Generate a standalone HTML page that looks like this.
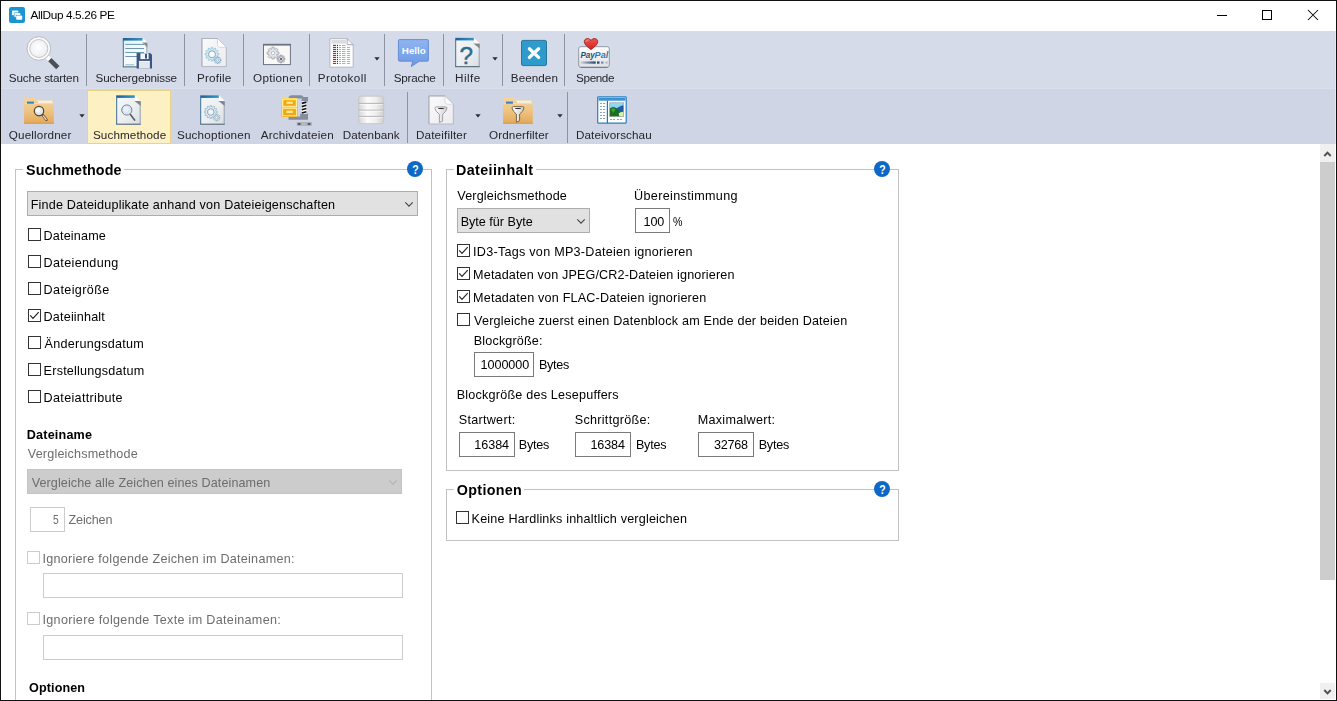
<!DOCTYPE html>
<html lang="de"><head><meta charset="utf-8"><title>AllDup 4.5.26 PE</title>
<style>
html,body{margin:0;padding:0}
body{width:1337px;height:701px;position:relative;overflow:hidden;background:#fff;font-family:"Liberation Sans",sans-serif}
.a{position:absolute}
.t{position:absolute;white-space:pre;line-height:1;font-family:"Liberation Sans",sans-serif}
.sep{position:absolute;width:1px;background:#8e93a3}
.cb{position:absolute;width:11px;height:11px;border:1px solid #333;background:#fff}
.cbd{position:absolute;width:11px;height:11px;border:1px solid #ccc;background:#fff}
.tx{position:absolute;border:1px solid #7a7a7a;background:#fff;box-sizing:border-box}
.txd{position:absolute;border:1px solid #ccc;background:#fff;box-sizing:border-box}
.combo{position:absolute;border:1px solid #adadad;background:#e1e1e1;box-sizing:border-box}
.gl{position:absolute;background:#c3c3c3}
svg{position:absolute;overflow:visible}
</style></head>
<body>
<div class="a" style="left:0px;top:0px;width:1337px;height:31px;background:#fff;"></div>
<div class="a" style="left:1px;top:31px;width:1335px;height:58px;background:#d5dbe9;"></div>
<div class="a" style="left:1px;top:89px;width:1335px;height:55px;background:#cfd5e5;"></div>
<div class="a" style="left:1px;top:88px;width:1335px;height:1px;background:#d9dfed;"></div>
<div class="a" style="left:1335px;top:31px;width:1px;height:113px;background:#e3e7f1;"></div>
<div class="a" style="left:0px;top:0px;width:1337px;height:1px;background:#111;"></div>
<div class="a" style="left:0px;top:0px;width:1px;height:701px;background:#111;"></div>
<div class="a" style="left:1336px;top:0px;width:1px;height:701px;background:#111;"></div>
<div class="a" style="left:0px;top:700px;width:1337px;height:1px;background:#111;"></div>
<div class="a" style="left:1217px;top:15px;width:10px;height:1px;background:#000;"></div>
<div class="a" style="left:1262px;top:10px;width:8px;height:8px;border:1px solid #000"></div>
<svg style="left:1308px;top:10px" width="10" height="10" viewBox="0 0 10 10"><path d="M0 0 L10 10 M10 0 L0 10" stroke="#000" stroke-width="1.05" fill="none"/></svg>
<svg style="left:9px;top:7px" width="16" height="16" viewBox="0 0 16 16"><rect x="0" y="0" width="16" height="16" rx="2.2" fill="#1b94d2"/><rect x="3" y="3.6" width="6.4" height="4.6" rx="0.8" fill="#fff" opacity=".95"/><rect x="5" y="5.6" width="6.4" height="4.6" rx="0.8" fill="#1b94d2"/><rect x="5.4" y="6" width="6" height="4.2" rx="0.8" fill="#eaf5fb"/><rect x="6.8" y="8" width="6.4" height="4.6" rx="0.8" fill="#1b94d2"/><rect x="7.2" y="8.4" width="6" height="4.3" rx="0.8" fill="#fff"/></svg>
<div class="sep" style="left:86px;top:34px;height:52px"></div>
<div class="sep" style="left:184px;top:34px;height:52px"></div>
<div class="sep" style="left:243px;top:34px;height:52px"></div>
<div class="sep" style="left:309px;top:34px;height:52px"></div>
<div class="sep" style="left:384px;top:34px;height:52px"></div>
<div class="sep" style="left:443px;top:34px;height:52px"></div>
<div class="sep" style="left:502px;top:34px;height:52px"></div>
<div class="sep" style="left:564px;top:34px;height:52px"></div>
<div class="sep" style="left:407px;top:92px;height:51px"></div>
<div class="sep" style="left:567px;top:92px;height:51px"></div>
<div class="a" style="left:87px;top:90px;width:82px;height:52px;background:#fdf1c4;border:1px solid #ead288;box-sizing:content-box"></div>
<svg style="left:373.8px;top:57.1px" width="6" height="4" viewBox="0 0 6 4"><path d="M0.3 0.2 H5.7 L3 3.5 Z" fill="#2a2a38"/></svg>
<svg style="left:491.8px;top:57.1px" width="6" height="4" viewBox="0 0 6 4"><path d="M0.3 0.2 H5.7 L3 3.5 Z" fill="#2a2a38"/></svg>
<svg style="left:79px;top:113.8px" width="6" height="4" viewBox="0 0 6 4"><path d="M0.3 0.2 H5.7 L3 3.5 Z" fill="#2a2a38"/></svg>
<svg style="left:474.7px;top:113.8px" width="6" height="4" viewBox="0 0 6 4"><path d="M0.3 0.2 H5.7 L3 3.5 Z" fill="#2a2a38"/></svg>
<svg style="left:556.9px;top:113.8px" width="6" height="4" viewBox="0 0 6 4"><path d="M0.3 0.2 H5.7 L3 3.5 Z" fill="#2a2a38"/></svg>
<svg style="left:0;top:0" width="700" height="146" viewBox="0 0 700 146">

<defs>
 <linearGradient id="gBar" x1="0" y1="0" x2="1" y2="0"><stop offset="0" stop-color="#1d5f96"/><stop offset="1" stop-color="#3596c8"/></linearGradient>
 <linearGradient id="gDoc" x1="0" y1="0" x2="1" y2="1"><stop offset="0" stop-color="#f4f8fb"/><stop offset=".55" stop-color="#eceff2"/><stop offset="1" stop-color="#d9dde1"/></linearGradient>
 <linearGradient id="gDocC" x1="0" y1="0" x2="1" y2="1"><stop offset="0" stop-color="#dff1fa"/><stop offset=".5" stop-color="#f6fbfd"/><stop offset="1" stop-color="#e4eef4"/></linearGradient>
 <linearGradient id="gPlain" x1="0" y1="0" x2="1" y2="1"><stop offset="0" stop-color="#fafafb"/><stop offset="1" stop-color="#ececf0"/></linearGradient>
 <linearGradient id="gFolder" x1="0" y1="0" x2="0" y2="1"><stop offset="0" stop-color="#f3d4a0"/><stop offset=".5" stop-color="#eec482"/><stop offset="1" stop-color="#e3a858"/></linearGradient>
 <linearGradient id="gBubble" x1="0" y1="0" x2="0" y2="1"><stop offset="0" stop-color="#8fb5f0"/><stop offset="1" stop-color="#6d98e4"/></linearGradient>
 <linearGradient id="gDisc" x1="0" y1="0" x2="1" y2="0"><stop offset="0" stop-color="#d4d4d4"/><stop offset=".35" stop-color="#fbfbfb"/><stop offset=".7" stop-color="#eeeeee"/><stop offset="1" stop-color="#cfcfcf"/></linearGradient>
 <linearGradient id="gCard" x1="0" y1="0" x2="0" y2="1"><stop offset="0" stop-color="#ffffff"/><stop offset="1" stop-color="#dfe2e6"/></linearGradient>
 <linearGradient id="gPPbar" x1="0" y1="0" x2="1" y2="0"><stop offset="0" stop-color="#d0d6dc"/><stop offset="1" stop-color="#24426e"/></linearGradient>
 <linearGradient id="gHeart" x1="0" y1="0" x2="0" y2="1"><stop offset="0" stop-color="#f0564c"/><stop offset="1" stop-color="#d2201f"/></linearGradient>
 <linearGradient id="gYel" x1="0" y1="0" x2="0" y2="1"><stop offset="0" stop-color="#fbd23c"/><stop offset="1" stop-color="#f0a612"/></linearGradient>
 <linearGradient id="gSky" x1="0" y1="0" x2="0" y2="1"><stop offset="0" stop-color="#9adcf6"/><stop offset="1" stop-color="#5cc3f0"/></linearGradient>
 <radialGradient id="gLens" cx=".45" cy=".45" r=".6"><stop offset="0" stop-color="#ffffff"/><stop offset="1" stop-color="#e9eaf0"/></radialGradient>
 <linearGradient id="gFunnel" x1="0" y1="0" x2="1" y2="0"><stop offset="0" stop-color="#ffffff"/><stop offset="1" stop-color="#cfcfcf"/></linearGradient>
</defs>

<path d="M47.2 57 L57.6 67.4" stroke="#fafafa" stroke-width="4.2" stroke-linecap="butt"/>
<path d="M49.8 59.6 L57.8 67.6" stroke="#4b4f57" stroke-width="4.6" stroke-linecap="butt"/>
<circle cx="38.8" cy="48.5" r="10.4" fill="url(#gLens)" stroke="#fbfbfb" stroke-width="2.6"/>
<circle cx="38.8" cy="48.5" r="11.8" fill="none" stroke="#b3b5bd" stroke-width=".9"/>
<circle cx="38.8" cy="48.5" r="9" fill="none" stroke="#bdbcbc" stroke-width=".9"/>
<path d="M122.8 38.0 H142.70000000000002 L147.3 42.6 V67.4 H122.8 Z" fill="url(#gDocC)"/><path d="M122.8 38.0 H142.70000000000002 V40.6 H122.8 Z" fill="url(#gBar)"/><path d="M142.70000000000002 38.0 L147.3 42.6 H142.70000000000002 Z" fill="#fdfdfd"/><path d="M142.20000000000002 42.6 H147.3 L147.3 47.6 Z" fill="#4a4744" opacity=".62"/><path d="M123.3 40.0 V66.9" stroke="#3b6c93" stroke-width="1" fill="none"/><path d="M122.8 66.9 H147.3" stroke="#3d5a68" stroke-width="1" fill="none"/><path d="M146.8 43.6 V67.4" stroke="#7e929e" stroke-width="1" fill="none" opacity=".8"/>
<path d="M125.3 44.4 H144" stroke="#5f8aa6" stroke-width=".9"/>
<path d="M125.3 48.5 H144" stroke="#5f8aa6" stroke-width=".9"/>
<path d="M125.3 52.5 H144" stroke="#5f8aa6" stroke-width=".9"/>
<path d="M125.3 56.5 H144" stroke="#5f8aa6" stroke-width=".9"/>
<path d="M125.3 64.8 H134" stroke="#7fb2cc" stroke-width=".9"/>
<path d="M136.6 53 H150.2 L152 54.8 V68.5 H136.6 Z" fill="#3b5682"/>
<rect x="140.4" y="53.3" width="8.2" height="5.8" fill="#f4f6f9"/>
<rect x="145" y="54" width="2" height="4.6" fill="#3b5682"/>
<rect x="138.9" y="61" width="11" height="7.5" fill="#e4e6ea"/>
<path d="M138.9 61.4 H149.9" stroke="#fafafa" stroke-width=".8"/>
<path d="M201.9 38.5 H217.5 L226.3 47.3 V66.6 H201.9 Z" fill="url(#gPlain)" stroke="#b4b8c4" stroke-width="1"/><path d="M217.5 38.5 L226.3 47.3 H220.0 Q217.5 47.3 217.5 44.8 Z" fill="#fff" stroke="#c2c5ce" stroke-width=".6"/><path d="M201.9 66.6 V38.5 H217.5" fill="none" stroke="#aeb2be" stroke-width="1"/>
<path d="M217.23 53.44 L218.87 53.61 L218.87 54.99 L217.23 55.16 L216.96 56.17 L218.29 57.14 L217.60 58.33 L216.10 57.66 L215.36 58.40 L216.03 59.90 L214.84 60.59 L213.87 59.26 L212.86 59.53 L212.69 61.17 L211.31 61.17 L211.14 59.53 L210.13 59.26 L209.16 60.59 L207.97 59.90 L208.64 58.40 L207.90 57.66 L206.40 58.33 L205.71 57.14 L207.04 56.17 L206.77 55.16 L205.13 54.99 L205.13 53.61 L206.77 53.44 L207.04 52.43 L205.71 51.46 L206.40 50.27 L207.90 50.94 L208.64 50.20 L207.97 48.70 L209.16 48.01 L210.13 49.34 L211.14 49.07 L211.31 47.43 L212.69 47.43 L212.86 49.07 L213.87 49.34 L214.84 48.01 L216.03 48.70 L215.36 50.20 L216.10 50.94 L217.60 50.27 L218.29 51.46 L216.96 52.43 Z" fill="#d9edf4" stroke="#93c4d8" stroke-width="0.8" stroke-linejoin="round"/>
<circle cx="212" cy="54.3" r="3.5" fill="#f8fafb" stroke="#6c9cb8" stroke-width=".9"/>
<path d="M219.93 59.62 L221.06 59.68 L221.06 60.72 L219.93 60.78 L219.66 61.44 L220.42 62.28 L219.68 63.02 L218.84 62.26 L218.18 62.53 L218.12 63.66 L217.08 63.66 L217.02 62.53 L216.36 62.26 L215.52 63.02 L214.78 62.28 L215.54 61.44 L215.27 60.78 L214.14 60.72 L214.14 59.68 L215.27 59.62 L215.54 58.96 L214.78 58.12 L215.52 57.38 L216.36 58.14 L217.02 57.87 L217.08 56.74 L218.12 56.74 L218.18 57.87 L218.84 58.14 L219.68 57.38 L220.42 58.12 L219.66 58.96 Z" fill="#e4eff4" stroke="#6e9ab4" stroke-width="0.7" stroke-linejoin="round"/>
<circle cx="217.6" cy="60.2" r="1.1" fill="#f8fafb" stroke="#6e9ab4" stroke-width=".5"/>
<rect x="263.5" y="44.4" width="26.9" height="20.2" fill="#f8f8f6" stroke="#6e7280" stroke-width="1"/>
<rect x="263" y="43.9" width="27.9" height="1.7" fill="#6e7280"/>
<path d="M276.91 51.88 L278.90 52.00 L278.90 54.20 L276.91 54.32 L276.63 55.01 L277.95 56.49 L276.39 58.05 L274.91 56.73 L274.22 57.01 L274.10 59.00 L271.90 59.00 L271.78 57.01 L271.09 56.73 L269.61 58.05 L268.05 56.49 L269.37 55.01 L269.09 54.32 L267.10 54.20 L267.10 52.00 L269.09 51.88 L269.37 51.19 L268.05 49.71 L269.61 48.15 L271.09 49.47 L271.78 49.19 L271.90 47.20 L274.10 47.20 L274.22 49.19 L274.91 49.47 L276.39 48.15 L277.95 49.71 L276.63 51.19 Z" fill="#e3e6e9" stroke="#9aa0a9" stroke-width="0.8" stroke-linejoin="round"/>
<circle cx="273" cy="53.1" r="1.7" fill="#fdfdfd" stroke="#a6abb3" stroke-width=".7"/>
<path d="M284.06 58.08 L284.94 58.29 L284.94 59.71 L284.06 59.92 L283.82 60.52 L284.29 61.28 L283.28 62.29 L282.52 61.82 L281.92 62.06 L281.71 62.94 L280.29 62.94 L280.08 62.06 L279.48 61.82 L278.72 62.29 L277.71 61.28 L278.18 60.52 L277.94 59.92 L277.06 59.71 L277.06 58.29 L277.94 58.08 L278.18 57.48 L277.71 56.72 L278.72 55.71 L279.48 56.18 L280.08 55.94 L280.29 55.06 L281.71 55.06 L281.92 55.94 L282.52 56.18 L283.28 55.71 L284.29 56.72 L283.82 57.48 Z" fill="#d3d6da" stroke="#92969f" stroke-width="0.8" stroke-linejoin="round"/>
<circle cx="281" cy="59" r="2.3" fill="#e9ebed" stroke="#8a8e97" stroke-width=".7"/>
<rect x="280" y="58" width="2" height="2" fill="#686c76"/>
<path d="M329.9 38.7 H347.2 L353.2 44.7 V67.2 H329.9 Z" fill="#fdfdfd" stroke="#b4b8c4" stroke-width="1"/>
<path d="M347.2 38.7 V44.7 H353.2" fill="none" stroke="#9ca0ac" stroke-width=".9"/>
<rect x="331.5" y="40" width="14.5" height="3.6" fill="#dcdcde"/>
<rect x="333" y="44.85" width="3.1" height="1.1" fill="#6a3a6c"/>
<rect x="337" y="44.85" width="1" height="1.1" fill="#3a2a3a"/>
<rect x="339" y="44.95" width="2" height=".9" fill="#a2a8a6"/>
<rect x="342" y="44.95" width="3.5" height=".9" fill="#a2a8a6"/>
<rect x="333" y="46.85" width="3.1" height="1.1" fill="#5b3a7c"/>
<rect x="337" y="46.85" width="1" height="1.1" fill="#3a2a3a"/>
<rect x="339" y="46.95" width="2" height=".9" fill="#a2a8a6"/>
<rect x="342" y="46.95" width="3.5" height=".9" fill="#a2a8a6"/>
<rect x="347" y="46.95" width="3" height=".9" fill="#a2a8a6"/>
<rect x="333" y="48.85" width="3.1" height="1.1" fill="#3050a0"/>
<rect x="337" y="48.85" width="1" height="1.1" fill="#3a2a3a"/>
<rect x="339" y="48.95" width="2" height=".9" fill="#a2a8a6"/>
<rect x="342" y="48.95" width="3.5" height=".9" fill="#a2a8a6"/>
<rect x="347" y="48.95" width="3" height=".9" fill="#a2a8a6"/>
<rect x="333" y="50.85" width="3.1" height="1.1" fill="#7c2a5c"/>
<rect x="337" y="50.85" width="1" height="1.1" fill="#3a2a3a"/>
<rect x="339" y="50.95" width="2" height=".9" fill="#a2a8a6"/>
<rect x="342" y="50.95" width="3.5" height=".9" fill="#a2a8a6"/>
<rect x="347" y="50.95" width="3" height=".9" fill="#a2a8a6"/>
<rect x="333" y="52.85" width="3.1" height="1.1" fill="#2f5f7c"/>
<rect x="337" y="52.85" width="1" height="1.1" fill="#3a2a3a"/>
<rect x="339" y="52.95" width="2" height=".9" fill="#a2a8a6"/>
<rect x="342" y="52.95" width="3.5" height=".9" fill="#a2a8a6"/>
<rect x="347" y="52.95" width="3" height=".9" fill="#a2a8a6"/>
<rect x="333" y="54.85" width="3.1" height="1.1" fill="#b4201e"/>
<rect x="337" y="54.85" width="1" height="1.1" fill="#3a2a3a"/>
<rect x="339" y="54.95" width="2" height=".9" fill="#a2a8a6"/>
<rect x="342" y="54.95" width="3.5" height=".9" fill="#a2a8a6"/>
<rect x="347" y="54.95" width="3" height=".9" fill="#a2a8a6"/>
<rect x="333" y="56.85" width="3.1" height="1.1" fill="#a82018"/>
<rect x="337" y="56.85" width="1" height="1.1" fill="#3a2a3a"/>
<rect x="339" y="56.95" width="2" height=".9" fill="#a2a8a6"/>
<rect x="342" y="56.95" width="3.5" height=".9" fill="#a2a8a6"/>
<rect x="347" y="56.95" width="3" height=".9" fill="#a2a8a6"/>
<rect x="333" y="58.85" width="3.1" height="1.1" fill="#a02418"/>
<rect x="337" y="58.85" width="1" height="1.1" fill="#3a2a3a"/>
<rect x="339" y="58.95" width="2" height=".9" fill="#a2a8a6"/>
<rect x="342" y="58.95" width="3.5" height=".9" fill="#a2a8a6"/>
<rect x="347" y="58.95" width="3" height=".9" fill="#a2a8a6"/>
<rect x="333" y="60.85" width="3.1" height="1.1" fill="#c03414"/>
<rect x="337" y="60.85" width="1" height="1.1" fill="#3a2a3a"/>
<rect x="339" y="60.95" width="2" height=".9" fill="#a2a8a6"/>
<rect x="342" y="60.95" width="3.5" height=".9" fill="#a2a8a6"/>
<rect x="347" y="60.95" width="3" height=".9" fill="#a2a8a6"/>
<rect x="333" y="62.85" width="3.1" height="1.1" fill="#a42a1a"/>
<rect x="337" y="62.85" width="1" height="1.1" fill="#3a2a3a"/>
<rect x="339" y="62.95" width="2" height=".9" fill="#a2a8a6"/>
<rect x="342" y="62.95" width="3.5" height=".9" fill="#a2a8a6"/>
<rect x="347" y="62.95" width="3" height=".9" fill="#a2a8a6"/>
<path d="M399.6 39.6 H427.2 Q428.4 39.6 428.4 40.8 V60 Q428.4 61.2 427.2 61.2 H419.4 L411.2 66.6 L412.8 61.2 H399.6 Q398.4 61.2 398.4 60 V40.8 Q398.4 39.6 399.6 39.6 Z" fill="url(#gBubble)" stroke="#6088d2" stroke-width=".9"/>
<text x="413.8" y="54" text-anchor="middle" font-family="'Liberation Sans',sans-serif" font-weight="700" font-size="9.8" fill="#f4fbff" textLength="24" lengthAdjust="spacingAndGlyphs">Hello</text>
<path d="M455.2 37.8 H473.9 L479.7 43.599999999999994 V67.19999999999999 H455.2 Z" fill="url(#gDoc)"/><path d="M455.2 37.8 H473.9 V40.4 H455.2 Z" fill="url(#gBar)"/><path d="M473.9 37.8 L479.7 43.599999999999994 H473.9 Z" fill="#fdfdfd"/><path d="M473.4 43.599999999999994 H479.7 L479.7 48.599999999999994 Z" fill="#4a4744" opacity=".62"/><path d="M455.7 39.8 V66.69999999999999" stroke="#3b6c93" stroke-width="1" fill="none"/><path d="M455.2 66.69999999999999 H479.7" stroke="#3d5a68" stroke-width="1" fill="none"/><path d="M479.2 44.599999999999994 V67.19999999999999" stroke="#7e929e" stroke-width="1" fill="none" opacity=".8"/>
<text x="466.3" y="63.7" text-anchor="middle" font-family="'Liberation Sans',sans-serif" font-size="24.3" fill="#2f6d8e" stroke="#2f6d8e" stroke-width=".45">?</text>
<rect x="521.5" y="40.4" width="25" height="25.2" rx="1.6" fill="#2e9bcc" stroke="#1f6e98" stroke-width=".9"/>
<path d="M529.4 48.8 L538.6 57.4 M538.6 48.8 L529.4 57.4" stroke="#fff" stroke-width="3.3" stroke-linecap="round"/>
<rect x="578.7" y="46.7" width="30.6" height="20.6" rx="2.2" fill="url(#gCard)" stroke="#8c9099" stroke-width=".9"/>
<path d="M580.5 67.4 H607.5" stroke="#6e727a" stroke-width=".9"/>
<text x="580.4" y="57.5" font-family="'Liberation Sans',sans-serif" font-style="italic" font-weight="700" font-size="8.9" fill="#2c4c76" textLength="14.4" lengthAdjust="spacingAndGlyphs">Pay</text>
<text x="594.6" y="57.5" font-family="'Liberation Sans',sans-serif" font-style="italic" font-weight="700" font-size="8.9" fill="#3c74a4" textLength="13.6" lengthAdjust="spacingAndGlyphs">Pal</text>
<rect x="580.5" y="61.4" width="15.2" height="2.3" fill="url(#gPPbar)"/>
<rect x="597" y="61.4" width="2.5" height="2.3" fill="#2c4c76"/>
<rect x="601" y="61.4" width="2.5" height="2.3" fill="#7c8fa8"/>
<rect x="605.3" y="61.4" width="2.5" height="2.3" fill="#b4c0cc"/>
<path d="M591 49.6 C586.5 46.4 584 43.6 584.3 41.2 C584.6 38.4 588.6 37.4 591 40.4 C593.4 37.4 597.4 38.4 597.7 41.2 C598 43.6 595.5 46.4 591 49.6 Z" fill="url(#gHeart)" stroke="#8c1a1a" stroke-width=".8"/>
<path d="M586 41.4 Q586.4 39.6 588.4 39.8" stroke="#f9948a" stroke-width="1" fill="none" stroke-linecap="round"/>
<path d="M36.1 100.4 H52.599999999999994 V105.0 H36.1 Z" fill="#f7efdc" stroke="#ead9b4" stroke-width=".5"/><path d="M24.1 99.0 Q24.1 98.0 25.1 98.0 H35.1 L38.6 103.1 H52.8 Q53.8 103.1 53.8 104.1 V123.7 H24.1 Z" fill="url(#gFolder)"/><path d="M24.6 103.6 H53.3" stroke="#f9e4b6" stroke-width="1" opacity=".7"/><path d="M24.1 123.2 H53.8" stroke="#d49e50" stroke-width="1"/><rect x="27.0" y="101.6" width="6.9" height="2.1" fill="#2b86cc"/>
<path d="M42.4 114.8 L46.4 119.8" stroke="#5e4426" stroke-width="2.6" stroke-linecap="round"/>
<path d="M43.2 115.8 L46.2 119.5" stroke="#f2e4cc" stroke-width="1.2" stroke-linecap="round"/>
<circle cx="39" cy="111.1" r="4.7" fill="#dde6ee" stroke="#5e4426" stroke-width="1.2"/>
<circle cx="38.2" cy="110.2" r="2.4" fill="#fafcfe" opacity=".85"/>
<path d="M116.2 95.3 H134.89999999999998 L140.7 101.1 V124.69999999999999 H116.2 Z" fill="url(#gDoc)"/><path d="M116.2 95.3 H134.89999999999998 V97.89999999999999 H116.2 Z" fill="url(#gBar)"/><path d="M134.89999999999998 95.3 L140.7 101.1 H134.89999999999998 Z" fill="#fdfdfd"/><path d="M134.39999999999998 101.1 H140.7 L140.7 106.1 Z" fill="#4a4744" opacity=".62"/><path d="M116.7 97.3 V124.19999999999999" stroke="#3b6c93" stroke-width="1" fill="none"/><path d="M116.2 124.19999999999999 H140.7" stroke="#3d5a68" stroke-width="1" fill="none"/><path d="M140.2 102.1 V124.69999999999999" stroke="#7e929e" stroke-width="1" fill="none" opacity=".8"/>
<path d="M130.4 114.4 L134.6 120" stroke="#5c6068" stroke-width="1.7" stroke-linecap="round"/>
<circle cx="126.8" cy="110" r="5.1" fill="#d7e5f5" stroke="#7e868f" stroke-width="1"/>
<circle cx="126.2" cy="109.2" r="2.6" fill="#eaf2fb" opacity=".9"/>
<path d="M200.2 95.3 H218.89999999999998 L224.7 101.1 V124.69999999999999 H200.2 Z" fill="url(#gDoc)"/><path d="M200.2 95.3 H218.89999999999998 V97.89999999999999 H200.2 Z" fill="url(#gBar)"/><path d="M218.89999999999998 95.3 L224.7 101.1 H218.89999999999998 Z" fill="#fdfdfd"/><path d="M218.39999999999998 101.1 H224.7 L224.7 106.1 Z" fill="#4a4744" opacity=".62"/><path d="M200.7 97.3 V124.19999999999999" stroke="#3b6c93" stroke-width="1" fill="none"/><path d="M200.2 124.19999999999999 H224.7" stroke="#3d5a68" stroke-width="1" fill="none"/><path d="M224.2 102.1 V124.69999999999999" stroke="#7e929e" stroke-width="1" fill="none" opacity=".8"/>
<path d="M215.83 111.18 L217.37 111.34 L217.37 112.66 L215.83 112.82 L215.57 113.80 L216.82 114.72 L216.16 115.85 L214.75 115.23 L214.03 115.95 L214.65 117.36 L213.52 118.02 L212.60 116.77 L211.62 117.03 L211.46 118.57 L210.14 118.57 L209.98 117.03 L209.00 116.77 L208.08 118.02 L206.95 117.36 L207.57 115.95 L206.85 115.23 L205.44 115.85 L204.78 114.72 L206.03 113.80 L205.77 112.82 L204.23 112.66 L204.23 111.34 L205.77 111.18 L206.03 110.20 L204.78 109.28 L205.44 108.15 L206.85 108.77 L207.57 108.05 L206.95 106.64 L208.08 105.98 L209.00 107.23 L209.98 106.97 L210.14 105.43 L211.46 105.43 L211.62 106.97 L212.60 107.23 L213.52 105.98 L214.65 106.64 L214.03 108.05 L214.75 108.77 L216.16 108.15 L216.82 109.28 L215.57 110.20 Z" fill="#e2ecf1" stroke="#96b6c8" stroke-width="0.8" stroke-linejoin="round"/>
<circle cx="210.8" cy="112" r="3.3" fill="#f0f4f7" stroke="#7c9fb6" stroke-width=".9"/>
<path d="M218.83 117.05 L219.96 117.09 L219.96 118.11 L218.83 118.15 L218.57 118.79 L219.33 119.62 L218.62 120.33 L217.79 119.57 L217.15 119.83 L217.11 120.96 L216.09 120.96 L216.05 119.83 L215.41 119.57 L214.58 120.33 L213.87 119.62 L214.63 118.79 L214.37 118.15 L213.24 118.11 L213.24 117.09 L214.37 117.05 L214.63 116.41 L213.87 115.58 L214.58 114.87 L215.41 115.63 L216.05 115.37 L216.09 114.24 L217.11 114.24 L217.15 115.37 L217.79 115.63 L218.62 114.87 L219.33 115.58 L218.57 116.41 Z" fill="#e4ecf1" stroke="#86a4b8" stroke-width="0.7" stroke-linejoin="round"/>
<circle cx="216.6" cy="117.6" r="1.1" fill="#f0f4f7" stroke="#86a4b8" stroke-width=".5"/>
<path d="M288.5 98.4 Q288.5 95.2 292 95.2 H300.5 Q303 95.2 303.4 97 H308 V101.6 H301.6 V98.6 Z" fill="#858d9f"/>
<path d="M300.2 113.4 H308 V119.8 H288.5 V116.4 H300.2 Z" fill="#858d9f"/>
<rect x="301.6" y="101.2" width="5" height="12.6" fill="#fbfbfb"/>
<path d="M301.8 103.40 L306.4 102.10" stroke="#15151a" stroke-width="1.7"/>
<path d="M301.8 106.60 L306.4 105.30" stroke="#15151a" stroke-width="1.7"/>
<path d="M301.8 109.80 L306.4 108.50" stroke="#15151a" stroke-width="1.7"/>
<path d="M301.8 113.00 L306.4 111.70" stroke="#15151a" stroke-width="1.7"/>
<rect x="281.4" y="98" width="16.4" height="18.9" rx=".8" fill="url(#gYel)"/>
<rect x="282.6" y="99.1" width="14" height="7.6" fill="none" stroke="#fff4b4" stroke-width=".9"/>
<rect x="283.8" y="100.39999999999999" width="11.6" height="5" fill="#f2a614"/>
<rect x="286.4" y="101.6" width="6.4" height="2.3" fill="#ffe690"/>
<rect x="282.6" y="108.2" width="14" height="7.6" fill="none" stroke="#fff4b4" stroke-width=".9"/>
<rect x="283.8" y="109.5" width="11.6" height="5" fill="#f2a614"/>
<rect x="286.4" y="110.7" width="6.4" height="2.3" fill="#ffe690"/>
<rect x="296.8" y="122.3" width="14.8" height="3.3" fill="#9a9ea8"/>
<rect x="301.6" y="121.9" width="5" height="4" fill="#b4b8c0"/>
<path d="M298.2 123.95 H300.2 M308.2 123.95 H310.2" stroke="#3a3e48" stroke-width="1.5"/>
<rect x="358.6" y="96.2" width="25.1" height="27.4" rx="2.6" fill="url(#gDisc)" stroke="#c4c4c4" stroke-width=".8"/>
<path d="M358.8 103.4 H383.6" stroke="#b4b4b4" stroke-width="1"/>
<path d="M359.6 104.4 H382.8" stroke="#ffffff" stroke-width=".8" opacity=".8"/>
<path d="M358.8 110.2 H383.6" stroke="#b4b4b4" stroke-width="1"/>
<path d="M359.6 111.2 H382.8" stroke="#ffffff" stroke-width=".8" opacity=".8"/>
<path d="M358.8 116.4 H383.6" stroke="#b4b4b4" stroke-width="1"/>
<path d="M359.6 117.4 H382.8" stroke="#ffffff" stroke-width=".8" opacity=".8"/>
<path d="M428.9 95.9 H444.99999999999994 L453.29999999999995 104.2 V124.0 H428.9 Z" fill="url(#gPlain)" stroke="#b4b8c4" stroke-width="1"/><path d="M444.99999999999994 95.9 L453.29999999999995 104.2 H447.49999999999994 Q444.99999999999994 104.2 444.99999999999994 101.7 Z" fill="#fff" stroke="#c2c5ce" stroke-width=".6"/><path d="M428.9 124.0 V95.9 H444.99999999999994" fill="none" stroke="#aeb2be" stroke-width="1"/>
<path d="M435 108.10000000000001 Q435 106.9 436.5 106.9 H445.5 Q447 106.9 447 108.10000000000001 Q446.6 111.4 442.6 114.4 V121.10000000000001 L439.4 122.5 V114.4 Q435.4 111.4 435 108.10000000000001 Z" fill="url(#gFunnel)" stroke="#979797" stroke-width=".9" stroke-linejoin="round"/><ellipse cx="441" cy="108.5" rx="3.3" ry=".62" fill="#1e1e1e"/>
<path d="M515.1 100.4 H531.6 V105.0 H515.1 Z" fill="#f7efdc" stroke="#ead9b4" stroke-width=".5"/><path d="M503.1 99.0 Q503.1 98.0 504.1 98.0 H514.1 L517.6 103.1 H531.8000000000001 Q532.8000000000001 103.1 532.8000000000001 104.1 V123.7 H503.1 Z" fill="url(#gFolder)"/><path d="M503.6 103.6 H532.3000000000001" stroke="#f9e4b6" stroke-width="1" opacity=".7"/><path d="M503.1 123.2 H532.8000000000001" stroke="#d49e50" stroke-width="1"/><rect x="506.0" y="101.6" width="6.9" height="2.1" fill="#2b86cc"/>
<path d="M512 107.8 Q512 106.6 513.5 106.6 H522.5 Q524 106.6 524 107.8 Q523.6 111.1 519.6 114.1 V120.8 L516.4 122.19999999999999 V114.1 Q512.4 111.1 512 107.8 Z" fill="url(#gFunnel)" stroke="#6e5a3a" stroke-width=".9" stroke-linejoin="round"/><ellipse cx="518" cy="108.5" rx="3.3" ry=".62" fill="#1e1e1e"/>
<rect x="597.7" y="96.8" width="28.5" height="26.3" rx=".6" fill="#fdfeff" stroke="#2a80c2" stroke-width="1.2"/>
<rect x="598.6" y="97.8" width="26.8" height="2.9" fill="#3a92d0"/>
<path d="M607.4 100.7 V123" stroke="#1f78b8" stroke-width="1.2"/>
<path d="M600 103.5 H602 M603 103.5 H605.2" stroke="#9aa0aa" stroke-width="1"/>
<path d="M600 106.5 H602 M603 106.5 H605.2" stroke="#9aa0aa" stroke-width="1"/>
<path d="M600 109.5 H602 M603 109.5 H605.2" stroke="#9aa0aa" stroke-width="1"/>
<path d="M600 112.5 H602 M603 112.5 H605.2" stroke="#9aa0aa" stroke-width="1"/>
<path d="M600 115.5 H602 M603 115.5 H605.2" stroke="#9aa0aa" stroke-width="1"/>
<path d="M600 118.5 H602 M603 118.5 H605.2" stroke="#9aa0aa" stroke-width="1"/>
<rect x="609.7" y="102.8" width="14" height="13.7" fill="url(#gSky)"/>
<path d="M616 108.5 L622.4 105.2 L623.7 106 V112 H616 Z" fill="#1f5ea6"/>
<path d="M609.7 108.6 Q613 105.8 616.2 108.2 Q619.5 110.4 621 114 V116.5 H609.7 Z" fill="#1c6e1c"/>
<path d="M611 109 Q613.5 107.4 615.6 109.4 L613 113 Z" fill="#3ea032"/>
<path d="M618.6 113.2 L623.7 111.4 V116.5 H619.4 Z" fill="#dcefa4"/>
<rect x="609.7" y="102.8" width="14" height="13.7" fill="none" stroke="#9aa4a0" stroke-width=".7"/>
<path d="M610 119.5 H612 M613 119.5 H615 M617 119.5 H619 M620 119.5 H622" stroke="#9aa0aa" stroke-width="1"/>
</svg>
<div class="a" style="left:15px;top:169px;width:1px;height:531px;background:#c3c3c3;"></div>
<div class="a" style="left:15px;top:169px;width:8px;height:1px;background:#c3c3c3;"></div>
<div class="a" style="left:124px;top:169px;width:308px;height:1px;background:#c3c3c3;"></div>
<div class="a" style="left:431px;top:169px;width:1px;height:531px;background:#c3c3c3;"></div>
<svg style="left:406px;top:160px" width="18" height="18" viewBox="0 0 18 18"><circle cx="9" cy="9" r="8" fill="#0e68c6"/><g transform="translate(9.4 13.8) scale(.8 1)"><text x="0" y="0" text-anchor="middle" font-family='"Liberation Sans",sans-serif' font-weight="700" font-size="13.2" fill="#fff">?</text></g></svg>
<div class="combo" style="left:27px;top:191px;width:391px;height:25px"></div>
<svg style="left:405px;top:202px" width="8" height="5" viewBox="0 0 8 5"><path d="M0.3 0.4 L4 4.2 L7.7 0.4" fill="none" stroke="#444" stroke-width="1.1"/></svg>
<div class="cb" style="left:28px;top:228px"></div>
<div class="cb" style="left:28px;top:255px"></div>
<div class="cb" style="left:28px;top:282px"></div>
<div class="cb" style="left:28px;top:309px"></div><svg style="left:28px;top:309px" width="13" height="13" viewBox="0 0 13 13"><path d="M2.2 6.3 L5 9.3 L10.7 3.1" fill="none" stroke="#222" stroke-width="1.15"/></svg>
<div class="cb" style="left:28px;top:336px"></div>
<div class="cb" style="left:28px;top:363px"></div>
<div class="cb" style="left:28px;top:390px"></div>
<div class="combo" style="left:27px;top:469px;width:375px;height:25px;background:#ccc;border-color:#c4c4c4"></div>
<svg style="left:389px;top:480px" width="8" height="5" viewBox="0 0 8 5"><path d="M0.3 0.4 L4 4.2 L7.7 0.4" fill="none" stroke="#b4b4b4" stroke-width="1.1"/></svg>
<div class="txd" style="left:30px;top:507px;width:35px;height:25px"></div>
<div class="cbd" style="left:27px;top:551px"></div>
<div class="txd" style="left:43px;top:573px;width:360px;height:25px"></div>
<div class="cbd" style="left:27px;top:612px"></div>
<div class="txd" style="left:43px;top:635px;width:360px;height:25px"></div>
<div class="a" style="left:446px;top:169px;width:1px;height:302px;background:#c3c3c3;"></div>
<div class="a" style="left:446px;top:169px;width:8px;height:1px;background:#c3c3c3;"></div>
<div class="a" style="left:536px;top:169px;width:363px;height:1px;background:#c3c3c3;"></div>
<div class="a" style="left:898px;top:169px;width:1px;height:302px;background:#c3c3c3;"></div>
<div class="a" style="left:446px;top:470px;width:453px;height:1px;background:#c3c3c3;"></div>
<svg style="left:873px;top:160px" width="18" height="18" viewBox="0 0 18 18"><circle cx="9" cy="9" r="8" fill="#0e68c6"/><g transform="translate(9.4 13.8) scale(.8 1)"><text x="0" y="0" text-anchor="middle" font-family='"Liberation Sans",sans-serif' font-weight="700" font-size="13.2" fill="#fff">?</text></g></svg>
<div class="combo" style="left:457px;top:208px;width:133px;height:25px"></div>
<svg style="left:577px;top:219px" width="8" height="5" viewBox="0 0 8 5"><path d="M0.3 0.4 L4 4.2 L7.7 0.4" fill="none" stroke="#444" stroke-width="1.1"/></svg>
<div class="tx" style="left:635px;top:208px;width:35px;height:25px"></div>
<div class="cb" style="left:457px;top:244px"></div><svg style="left:457px;top:244px" width="13" height="13" viewBox="0 0 13 13"><path d="M2.2 6.3 L5 9.3 L10.7 3.1" fill="none" stroke="#222" stroke-width="1.15"/></svg>
<div class="cb" style="left:457px;top:267px"></div><svg style="left:457px;top:267px" width="13" height="13" viewBox="0 0 13 13"><path d="M2.2 6.3 L5 9.3 L10.7 3.1" fill="none" stroke="#222" stroke-width="1.15"/></svg>
<div class="cb" style="left:457px;top:290px"></div><svg style="left:457px;top:290px" width="13" height="13" viewBox="0 0 13 13"><path d="M2.2 6.3 L5 9.3 L10.7 3.1" fill="none" stroke="#222" stroke-width="1.15"/></svg>
<div class="cb" style="left:457px;top:313px"></div>
<div class="tx" style="left:474px;top:352px;width:60px;height:25px"></div>
<div class="tx" style="left:459px;top:432px;width:56px;height:25px"></div>
<div class="tx" style="left:575px;top:432px;width:56px;height:25px"></div>
<div class="tx" style="left:698px;top:432px;width:56px;height:25px"></div>
<div class="a" style="left:446px;top:489px;width:1px;height:52px;background:#c3c3c3;"></div>
<div class="a" style="left:446px;top:489px;width:8px;height:1px;background:#c3c3c3;"></div>
<div class="a" style="left:524px;top:489px;width:375px;height:1px;background:#c3c3c3;"></div>
<div class="a" style="left:898px;top:489px;width:1px;height:52px;background:#c3c3c3;"></div>
<div class="a" style="left:446px;top:540px;width:453px;height:1px;background:#c3c3c3;"></div>
<svg style="left:873px;top:480px" width="18" height="18" viewBox="0 0 18 18"><circle cx="9" cy="9" r="8" fill="#0e68c6"/><g transform="translate(9.4 13.8) scale(.8 1)"><text x="0" y="0" text-anchor="middle" font-family='"Liberation Sans",sans-serif' font-weight="700" font-size="13.2" fill="#fff">?</text></g></svg>
<div class="cb" style="left:456px;top:511px"></div>
<div class="a" style="left:1320px;top:144px;width:15px;height:18px;background:#f0f0f0;"></div>
<div class="a" style="left:1320px;top:162px;width:15px;height:418px;background:#cdcdcd;"></div>
<div class="a" style="left:1320px;top:683px;width:15px;height:16px;background:#f0f0f0;"></div>
<svg style="left:1324px;top:151px" width="7" height="6" viewBox="0 0 7 6"><path d="M0.3 5 L3.5 1.6 L6.7 5" fill="none" stroke="#505050" stroke-width="1.9"/></svg>
<svg style="left:1324px;top:689px" width="7" height="6" viewBox="0 0 7 6"><path d="M0.3 1 L3.5 4.4 L6.7 1" fill="none" stroke="#505050" stroke-width="1.9"/></svg>
<div class="a" style="left:0;top:0;width:1337px;height:701px;will-change:transform">
<span class="t" style="left:30.60px;top:10.01px;font-size:11.8px;font-weight:400;color:#000;letter-spacing:-0.373px">AllDup 4.5.26 PE</span>
<span class="t" style="left:8.80px;top:72.10px;font-size:11.7px;font-weight:400;color:#26262e;letter-spacing:-0.167px">Suche starten</span>
<span class="t" style="left:95.60px;top:72.10px;font-size:11.7px;font-weight:400;color:#26262e;letter-spacing:-0.177px">Suchergebnisse</span>
<span class="t" style="left:196.90px;top:72.10px;font-size:11.7px;font-weight:400;color:#26262e;letter-spacing:0.200px">Profile</span>
<span class="t" style="left:253.00px;top:72.10px;font-size:11.7px;font-weight:400;color:#26262e;letter-spacing:0.286px">Optionen</span>
<span class="t" style="left:317.80px;top:72.10px;font-size:11.7px;font-weight:400;color:#26262e;letter-spacing:0.375px">Protokoll</span>
<span class="t" style="left:393.70px;top:72.10px;font-size:11.7px;font-weight:400;color:#26262e;letter-spacing:-0.233px">Sprache</span>
<span class="t" style="left:455.10px;top:72.10px;font-size:11.7px;font-weight:400;color:#26262e;letter-spacing:0.425px">Hilfe</span>
<span class="t" style="left:510.80px;top:72.10px;font-size:11.7px;font-weight:400;color:#26262e;letter-spacing:0.050px">Beenden</span>
<span class="t" style="left:576.10px;top:72.10px;font-size:11.7px;font-weight:400;color:#26262e;letter-spacing:-0.380px">Spende</span>
<span class="t" style="left:8.80px;top:129.10px;font-size:11.7px;font-weight:400;color:#26262e;letter-spacing:0.150px">Quellordner</span>
<span class="t" style="left:92.90px;top:129.10px;font-size:11.7px;font-weight:400;color:#26262e;letter-spacing:0.120px">Suchmethode</span>
<span class="t" style="left:176.90px;top:129.10px;font-size:11.7px;font-weight:400;color:#26262e;letter-spacing:0.191px">Suchoptionen</span>
<span class="t" style="left:260.70px;top:129.10px;font-size:11.7px;font-weight:400;color:#26262e;letter-spacing:0.183px">Archivdateien</span>
<span class="t" style="left:342.70px;top:129.10px;font-size:11.7px;font-weight:400;color:#26262e;letter-spacing:0.062px">Datenbank</span>
<span class="t" style="left:415.90px;top:129.10px;font-size:11.7px;font-weight:400;color:#26262e;letter-spacing:0.160px">Dateifilter</span>
<span class="t" style="left:489.00px;top:129.10px;font-size:11.7px;font-weight:400;color:#26262e;letter-spacing:0.109px">Ordnerfilter</span>
<span class="t" style="left:576.00px;top:129.10px;font-size:11.7px;font-weight:400;color:#26262e;letter-spacing:0.083px">Dateivorschau</span>
<span class="t" style="left:26.00px;top:163.10px;font-size:14.3px;font-weight:700;color:#000;letter-spacing:0.090px">Suchmethode</span>
<span class="t" style="left:30.70px;top:198.53px;font-size:12.6px;font-weight:400;color:#000;letter-spacing:0.182px">Finde Dateiduplikate anhand von Dateieigenschaften</span>
<span class="t" style="left:43.60px;top:229.73px;font-size:12.6px;font-weight:400;color:#000;letter-spacing:0.162px">Dateiname</span>
<span class="t" style="left:43.60px;top:256.73px;font-size:12.6px;font-weight:400;color:#000;letter-spacing:0.330px">Dateiendung</span>
<span class="t" style="left:43.60px;top:283.73px;font-size:12.6px;font-weight:400;color:#000;letter-spacing:0.367px">Dateigröße</span>
<span class="t" style="left:43.60px;top:310.73px;font-size:12.6px;font-weight:400;color:#000;letter-spacing:0.170px">Dateiinhalt</span>
<span class="t" style="left:44.60px;top:337.73px;font-size:12.6px;font-weight:400;color:#000;letter-spacing:0.254px">Änderungsdatum</span>
<span class="t" style="left:43.60px;top:364.73px;font-size:12.6px;font-weight:400;color:#000;letter-spacing:0.220px">Erstellungsdatum</span>
<span class="t" style="left:43.60px;top:391.73px;font-size:12.6px;font-weight:400;color:#000;letter-spacing:0.315px">Dateiattribute</span>
<span class="t" style="left:26.80px;top:428.83px;font-size:12.6px;font-weight:700;color:#000;letter-spacing:0.188px">Dateiname</span>
<span class="t" style="left:27.80px;top:448.13px;font-size:12.6px;font-weight:400;color:#6d6d6d;letter-spacing:0.175px">Vergleichsmethode</span>
<span class="t" style="left:31.70px;top:476.63px;font-size:12.6px;font-weight:400;color:#6d6d6d;letter-spacing:0.085px">Vergleiche alle Zeichen eines Dateinamen</span>
<span class="t" style="left:52.90px;top:513.63px;font-size:12.6px;font-weight:400;color:#6d6d6d;letter-spacing:0.000px;transform:scaleX(0.814);transform-origin:0px 0">5</span>
<span class="t" style="left:68.50px;top:513.63px;font-size:12.6px;font-weight:400;color:#6d6d6d;letter-spacing:-0.150px">Zeichen</span>
<span class="t" style="left:42.50px;top:553.03px;font-size:12.6px;font-weight:400;color:#6d6d6d;letter-spacing:0.260px">Ignoriere folgende Zeichen im Dateinamen:</span>
<span class="t" style="left:42.50px;top:614.13px;font-size:12.6px;font-weight:400;color:#6d6d6d;letter-spacing:0.308px">Ignoriere folgende Texte im Dateinamen:</span>
<span class="t" style="left:29.00px;top:681.73px;font-size:12.6px;font-weight:700;color:#000;letter-spacing:0.114px">Optionen</span>
<span class="t" style="left:455.90px;top:162.90px;font-size:14.3px;font-weight:700;color:#000;letter-spacing:0.410px">Dateiinhalt</span>
<span class="t" style="left:457.30px;top:189.63px;font-size:12.6px;font-weight:400;color:#000;letter-spacing:0.150px">Vergleichsmethode</span>
<span class="t" style="left:634.10px;top:189.63px;font-size:12.6px;font-weight:400;color:#000;letter-spacing:0.336px">Übereinstimmung</span>
<span class="t" style="left:460.70px;top:215.63px;font-size:12.6px;font-weight:400;color:#000;letter-spacing:-0.008px">Byte für Byte</span>
<span class="t" style="left:643.50px;top:215.63px;font-size:12.6px;font-weight:400;color:#000;letter-spacing:-0.100px">100</span>
<span class="t" style="left:673.30px;top:215.63px;font-size:12.6px;font-weight:400;color:#000;letter-spacing:0.000px;transform:scaleX(0.845);transform-origin:0px 0">%</span>
<span class="t" style="left:473.10px;top:245.73px;font-size:12.6px;font-weight:400;color:#000;letter-spacing:0.259px">ID3-Tags von MP3-Dateien ignorieren</span>
<span class="t" style="left:473.10px;top:268.63px;font-size:12.6px;font-weight:400;color:#000;letter-spacing:0.145px">Metadaten von JPEG/CR2-Dateien ignorieren</span>
<span class="t" style="left:473.10px;top:291.63px;font-size:12.6px;font-weight:400;color:#000;letter-spacing:0.194px">Metadaten von FLAC-Dateien ignorieren</span>
<span class="t" style="left:474.10px;top:314.63px;font-size:12.6px;font-weight:400;color:#000;letter-spacing:0.198px">Vergleiche zuerst einen Datenblock am Ende der beiden Dateien</span>
<span class="t" style="left:473.80px;top:334.63px;font-size:12.6px;font-weight:400;color:#000;letter-spacing:0.150px">Blockgröße:</span>
<span class="t" style="left:480.60px;top:358.63px;font-size:12.6px;font-weight:400;color:#000;letter-spacing:-0.067px">1000000</span>
<span class="t" style="left:538.90px;top:358.63px;font-size:12.6px;font-weight:400;color:#000;letter-spacing:-0.300px">Bytes</span>
<span class="t" style="left:456.70px;top:388.53px;font-size:12.6px;font-weight:400;color:#000;letter-spacing:0.212px">Blockgröße des Lesepuffers</span>
<span class="t" style="left:458.70px;top:413.73px;font-size:12.6px;font-weight:400;color:#000;letter-spacing:0.289px">Startwert:</span>
<span class="t" style="left:574.80px;top:413.73px;font-size:12.6px;font-weight:400;color:#000;letter-spacing:0.275px">Schrittgröße:</span>
<span class="t" style="left:697.70px;top:413.73px;font-size:12.6px;font-weight:400;color:#000;letter-spacing:0.282px">Maximalwert:</span>
<span class="t" style="left:474.30px;top:438.83px;font-size:12.6px;font-weight:400;color:#000;letter-spacing:-0.050px">16384</span>
<span class="t" style="left:518.80px;top:438.83px;font-size:12.6px;font-weight:400;color:#000;letter-spacing:-0.225px">Bytes</span>
<span class="t" style="left:590.50px;top:438.83px;font-size:12.6px;font-weight:400;color:#000;letter-spacing:-0.150px">16384</span>
<span class="t" style="left:635.90px;top:438.83px;font-size:12.6px;font-weight:400;color:#000;letter-spacing:-0.225px">Bytes</span>
<span class="t" style="left:713.90px;top:438.83px;font-size:12.6px;font-weight:400;color:#000;letter-spacing:-0.250px">32768</span>
<span class="t" style="left:758.70px;top:438.83px;font-size:12.6px;font-weight:400;color:#000;letter-spacing:-0.225px">Bytes</span>
<span class="t" style="left:456.80px;top:482.90px;font-size:14.3px;font-weight:700;color:#000;letter-spacing:0.329px">Optionen</span>
<span class="t" style="left:471.60px;top:512.83px;font-size:12.6px;font-weight:400;color:#000;letter-spacing:0.181px">Keine Hardlinks inhaltlich vergleichen</span>
</div>
</body></html>
